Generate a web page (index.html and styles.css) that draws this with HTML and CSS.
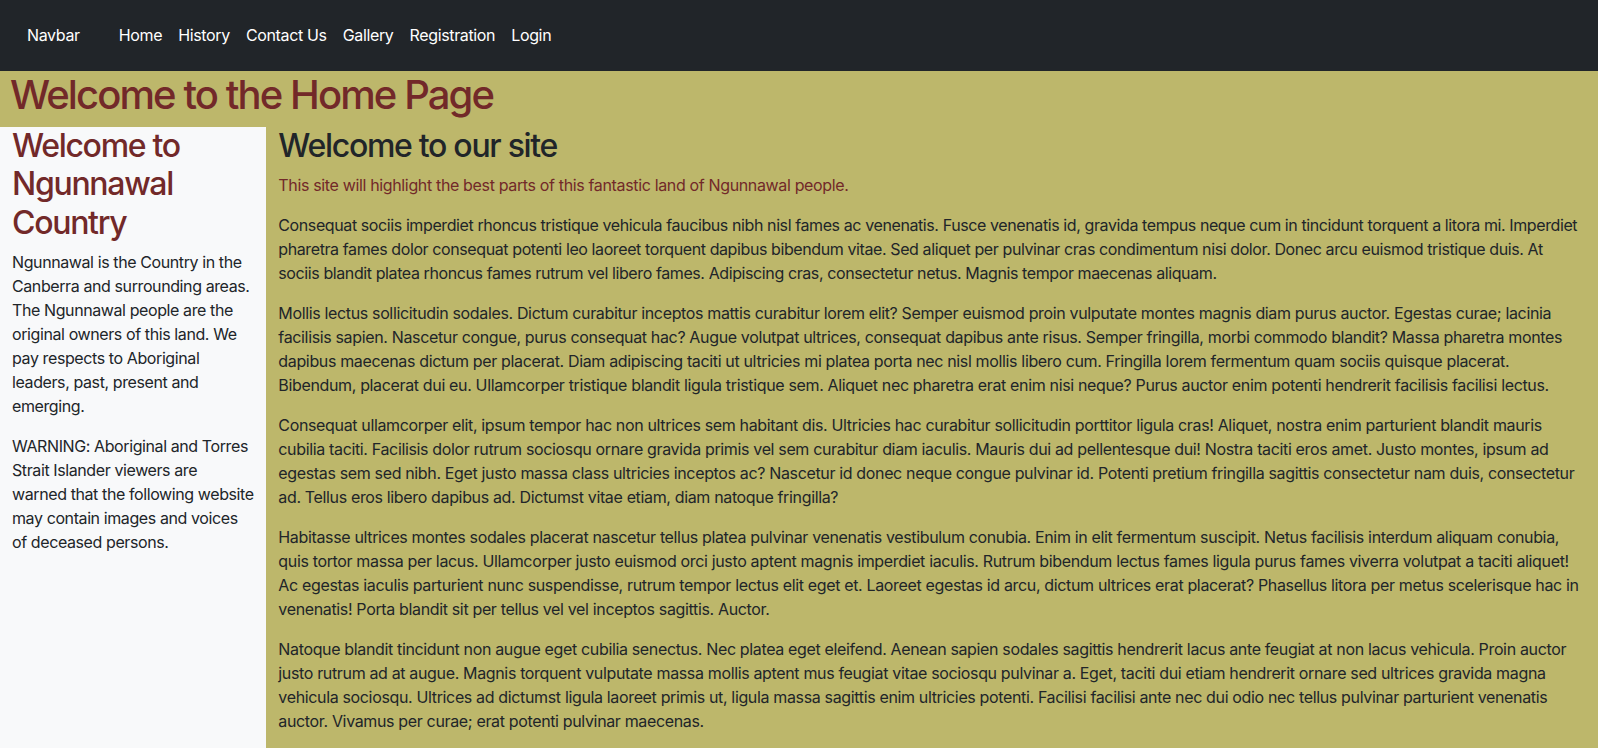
FILE: index.html
```html
<!DOCTYPE html>
<html lang="en">
<head>
<meta charset="utf-8">
<title>Home</title>
<link rel="stylesheet" href="styles.css">
</head>
<body>
<nav class="navbar">
  <a class="brand" href="#">Navbar</a>
  <ul class="nav">
    <li><a href="#">Home</a></li>
    <li><a href="#">History</a></li>
    <li><a href="#">Contact Us</a></li>
    <li><a href="#">Gallery</a></li>
    <li><a href="#">Registration</a></li>
    <li><a href="#">Login</a></li>
  </ul>
</nav>
<header class="page-title">
  <h1>Welcome to the Home Page</h1>
</header>
<div class="layout">
  <aside class="sidebar">
    <h2>Welcome to Ngunnawal Country</h2>
    <p>Ngunnawal is the Country in the Canberra and surrounding areas. The Ngunnawal people are the original owners of this land. We pay respects to Aboriginal leaders, past, present and emerging.</p>
    <p>WARNING: Aboriginal and Torres Strait Islander viewers are warned that the following website may contain images and voices of deceased persons.</p>
  </aside>
  <main class="content">
    <h2>Welcome to our site</h2>
    <p class="lead-note">This site will highlight the best parts of this fantastic land of Ngunnawal people.</p>
    <p class="tight">Consequat sociis imperdiet rhoncus tristique vehicula faucibus nibh nisl fames ac venenatis. Fusce venenatis id, gravida tempus neque cum in tincidunt torquent a litora mi. Imperdiet pharetra fames dolor consequat potenti leo laoreet torquent dapibus bibendum vitae. Sed aliquet per pulvinar cras condimentum nisi dolor. Donec arcu euismod tristique duis. At sociis blandit platea rhoncus fames rutrum vel libero fames. Adipiscing cras, consectetur netus. Magnis tempor maecenas aliquam.</p>
    <p>Mollis lectus sollicitudin sodales. Dictum curabitur inceptos mattis curabitur lorem elit? Semper euismod proin vulputate montes magnis diam purus auctor. Egestas curae; lacinia facilisis sapien. Nascetur congue, purus consequat hac? Augue volutpat ultrices, consequat dapibus ante risus. Semper fringilla, morbi commodo blandit? Massa pharetra montes dapibus maecenas dictum per placerat. Diam adipiscing taciti ut ultricies mi platea porta nec nisl mollis libero cum. Fringilla lorem fermentum quam sociis quisque placerat. Bibendum, placerat dui eu. Ullamcorper tristique blandit ligula tristique sem. Aliquet nec pharetra erat enim nisi neque? Purus auctor enim potenti hendrerit facilisis facilisi lectus.</p>
    <p>Consequat ullamcorper elit, ipsum tempor hac non ultrices sem habitant dis. Ultricies hac curabitur sollicitudin porttitor ligula cras! Aliquet, nostra enim parturient blandit mauris cubilia taciti. Facilisis dolor rutrum sociosqu ornare gravida primis vel sem curabitur diam iaculis. Mauris dui ad pellentesque dui! Nostra taciti eros amet. Justo montes, ipsum ad egestas sem sed nibh. Eget justo massa class ultricies inceptos ac? Nascetur id donec neque congue pulvinar id. Potenti pretium fringilla sagittis consectetur nam duis, consectetur ad. Tellus eros libero dapibus ad. Dictumst vitae etiam, diam natoque fringilla?</p>
    <p>Habitasse ultrices montes sodales placerat nascetur tellus platea pulvinar venenatis vestibulum conubia. Enim in elit fermentum suscipit. Netus facilisis interdum aliquam conubia, quis tortor massa per lacus. Ullamcorper justo euismod orci justo aptent magnis imperdiet iaculis. Rutrum bibendum lectus fames ligula purus fames viverra volutpat a taciti aliquet! Ac egestas iaculis parturient nunc suspendisse, rutrum tempor lectus elit eget et. Laoreet egestas id arcu, dictum ultrices erat placerat? Phasellus litora per metus scelerisque hac in venenatis! Porta blandit sit per tellus vel vel inceptos sagittis. Auctor.</p>
    <p>Natoque blandit tincidunt non augue eget cubilia senectus. Nec platea eget eleifend. Aenean sapien sodales sagittis hendrerit lacus ante feugiat at non lacus vehicula. Proin auctor justo rutrum ad at augue. Magnis torquent vulputate massa mollis aptent mus feugiat vitae sociosqu pulvinar a. Eget, taciti dui etiam hendrerit ornare sed ultrices gravida magna vehicula sociosqu. Ultrices ad dictumst ligula laoreet primis ut, ligula massa sagittis enim ultricies potenti. Facilisi facilisi ante nec dui odio nec tellus pulvinar parturient venenatis auctor. Vivamus per curae; erat potenti pulvinar maecenas.</p>
  </main>
</div>
</body>
</html>
```

FILE: styles.css
```css
* { box-sizing: border-box; }

body {
  margin: 0;
  font-family: Inter, "Liberation Sans", sans-serif;
  font-size: 16px;
  line-height: 1.5;
  letter-spacing: -0.35px;
  color: #212529;
  background: #fff;
}

.navbar {
  display: flex;
  align-items: center;
  height: 71px;
  padding: 0 12px 2px 27px;
  background: #212529;
}

.brand {
  color: #fff;
  text-decoration: none;
  margin-right: 31px;
}

.nav {
  display: flex;
  list-style: none;
  margin: 0;
  padding: 0;
}

.nav a {
  display: block;
  padding: 8px;
  color: #fff;
  text-decoration: none;
}

.page-title {
  background: #bdb76b;
  padding: 0 12px 8px 10px;
}

.page-title h1 {
  margin: 0;
  font-size: 40px;
  font-weight: 500;
  line-height: 1.2;
  letter-spacing: -1.9px;
  color: #722929;
}

.layout {
  display: grid;
  grid-template-columns: 2fr 10fr;
}

.sidebar {
  background: #f8f9fa;
  padding: 0 12px;
}

.sidebar p { letter-spacing: -0.4px; }

.content {
  background: #bdb76b;
  padding: 0 12px;
}

h2 {
  margin: 0 0 8px;
  font-size: 32px;
  font-weight: 500;
  line-height: 1.2;
  letter-spacing: -1.3px;
}

.sidebar h2 { color: #722929; }

p { margin: 0 0 16px; }

.tight { letter-spacing: -0.4px; }

.lead-note { color: #722929; }
```
